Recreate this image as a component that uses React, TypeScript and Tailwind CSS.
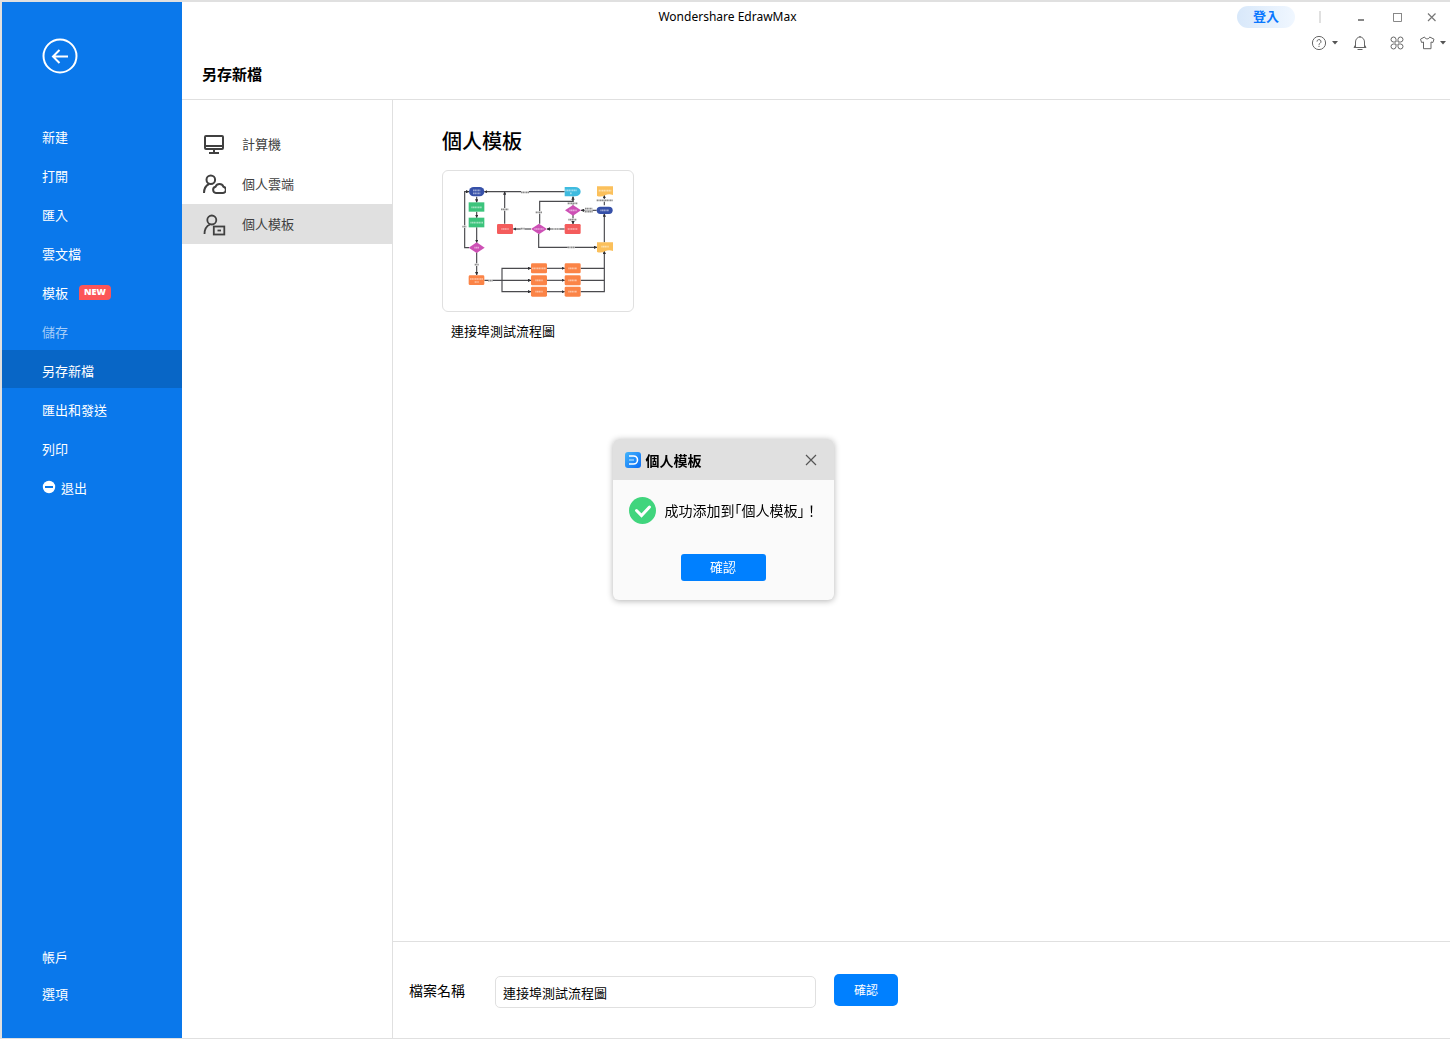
import React from "react";

const NAV_ITEMS = ["新建", "打開", "匯入", "雲文檔", "模板", "儲存", "另存新檔", "匯出和發送", "列印", "退出"];

function BackArrow() {
    return (
        <svg width="36" height="36" viewBox="0 0 36 36" fill="none" stroke="#fff" strokeWidth="2">
            <circle cx="18" cy="18" r="16.5" />
            <path d="M26 18.500H11.500M17.500 12L11 18.500l6.500 6.500" />
        </svg>
    );
}

function ComputerIcon() {
    return (
        <svg width="24" height="24" viewBox="0 0 24 24" fill="none" stroke="#404040" strokeWidth="2">
            <rect x="3" y="4" width="18" height="13" rx="1" />
            <path d="M3 14h18M12 17v4M7 21h10" />
        </svg>
    );
}

function CloudUserIcon() {
    return (
        <svg width="24" height="24" viewBox="0 0 24 24" fill="none" stroke="#404040" strokeWidth="2">
            <circle cx="8.800" cy="7.800" r="4.300" />
            <path d="M2 21c0-5 2-7.500 5-9" />
            <path d="M14 21a3.200 3.200 0 0 1-.4-6.300 4.200 4.200 0 0 1 7.800 0A3.200 3.200 0 0 1 21 21z" />
        </svg>
    );
}

function TemplateUserIcon() {
    return (
        <svg width="24" height="24" viewBox="0 0 24 24" fill="none" stroke="#404040" strokeWidth="1.800">
            <circle cx="9.800" cy="8" r="4.500" />
            <path d="M2.500 22c0-5 2-8 5.500-9.500" />
            <rect x="11.800" y="14.500" width="10.500" height="8" />
            <path d="M15.500 18.500h3.500" />
        </svg>
    );
}

function HelpIcon() {
    return (
        <svg width="16" height="16" viewBox="0 0 16 16" fill="none" stroke="#666">
            <circle cx="8" cy="8" r="6.600" />
            <path d="M6 6.600a2 2 0 1 1 3 1.700c-.7.4-1 .7-1 1.500M8 10.800v1.200" />
        </svg>
    );
}

function BellIcon() {
    return (
        <svg width="16" height="16" viewBox="0 0 16 16" fill="none" stroke="#666">
            <path d="M2 12.500h12M3.500 12V7a4.500 5 0 0 1 9 0v5M2 12.500L3.500 10M14 12.500L12.500 10M5.500 14.500h5M7.200 1.700h1.600" />
        </svg>
    );
}

function AppsIcon() {
    return (
        <svg width="16" height="16" viewBox="0 0 16 16" fill="none" stroke="#666">
            <path d="M7 7H4.300A2.500 2.500 0 1 1 7 4.300zM9 7h2.700A2.500 2.500 0 1 0 9 4.300zM7 9H4.300A2.500 2.500 0 1 0 7 11.700zM9 9h2.700A2.500 2.500 0 1 1 9 11.700z" />
        </svg>
    );
}

function ShirtIcon() {
    return (
        <svg width="16" height="16" viewBox="0 0 16 16" fill="none" stroke="#666" strokeLinejoin="round">
            <path d="M5.500 2L1.500 4.200 2.600 7.500l1.900-.5v6.700h7.500V7l1.900.5 1.100-3.300L10.700 2C10 4.500 6.300 4.500 5.500 2z" />
        </svg>
    );
}

function Caret() {
    return (
        <svg width="6" height="4" viewBox="0 0 6 4">
            <path d="M0 0h6L3 3.500z" fill="#555" />
        </svg>
    );
}

function Arrow({ d }: { d: string }) {
    return <path d={d} fill="none" stroke="#4a4a4e" strokeWidth="3.500" markerEnd="url(#tip)" />;
}

function Label({ x, y, w }: { x: number; y: number; w: number }) {
    return (
        <g>
            <rect x={x - w / 2} y={y - 4} width={w} height="8" fill="#fff" />
            <path d={`M${x - w / 2} ${y}h${w}`} stroke="#8b8b8b" strokeWidth="5" strokeDasharray="4 1" />
        </g>
    );
}

type NodeProps = { x: number; y: number; color: string; w?: number };

function Inner({ x, y, w = 22 }: { x: number; y: number; w?: number }) {
    return <path d={`M${x - w / 2} ${y}h${w}`} stroke="#fff" strokeOpacity=".5" strokeWidth="5" strokeDasharray="4 1" />;
}

function Box({ x, y, color, w }: NodeProps) {
    return (
        <g>
            <rect x={x - 24} y={y - 15} width="48" height="30" rx="4" fill={color} />
            <Inner x={x} y={y} w={w} />
        </g>
    );
}

function Diamond({ x, y, color, w }: NodeProps) {
    return (
        <g>
            <path d={`M${x - 24} ${y}l24-16 24 16-24 16z`} fill={color} />
            <Inner x={x} y={y} w={w} />
        </g>
    );
}

function Doc({ x, y, color, w }: NodeProps) {
    return (
        <g>
            <path d={`M${x - 24} ${y - 15}h48v26c-9-4-17-3-24 1s-16 5-24 2z`} fill={color} />
            <Inner x={x} y={y - 2} w={w} />
        </g>
    );
}

function Flowchart() {
    const orange = "#fb8447";
    return (
        <svg viewBox="24 18 570 420" className="block w-full">
            <defs>
                <marker id="tip" markerUnits="userSpaceOnUse" viewBox="0 0 10 10" refX="9" refY="5" markerWidth="10" markerHeight="10" orient="auto">
                    <path d="M0 0l10 5-10 5z" fill="#2f2f33" />
                </marker>
            </defs>
            <Arrow d="M125 95v17" />
            <Arrow d="M125 140v18" />
            <Arrow d="M125 187v46" />
            <Arrow d="M125 262v68" />
            <Arrow d="M102 248H89V80h13" />
            <Arrow d="M389 80H148" />
            <Arrow d="M209 176V80" />
            <Arrow d="M288 192h-53" />
            <Arrow d="M389 192h-53" />
            <Arrow d="M314 176v-67h100V95" />
            <Arrow d="M414 95v26" />
            <Arrow d="M414 150v27" />
            <Arrow d="M485 136h-47" />
            <Arrow d="M311 207v40h175" />
            <Arrow d="M508 121V91" />
            <Arrow d="M508 232v-86" />
            <Arrow d="M148 346h140" />
            <Arrow d="M201 346v-36h87" />
            <Arrow d="M201 346v34h87" />
            <Arrow d="M336 310h53" />
            <Arrow d="M336 346h53" />
            <Arrow d="M336 380h53" />
            <path d="M437 310h71M437 346h71" stroke="#4a4a4e" strokeWidth="3.500" />
            <Arrow d="M437 380h71V258" />

            <Label x={270} y={82} w={24} />
            <Label x={209} y={133} w={22} />
            <Label x={88} y={185} w={12} />
            <Label x={125} y={299} w={12} />
            <Label x={166} y={347} w={14} />
            <Label x={263} y={191} w={12} />
            <Label x={362} y={192} w={24} />
            <Label x={312} y={142} w={20} />
            <Label x={413} y={115} w={30} />
            <Label x={412} y={164} w={24} />
            <Label x={461} y={131} w={22} />
            <Label x={461} y={140} w={24} />
            <Label x={409} y={247} w={22} />
            <Label x={509} y={106} w={48} />

            <rect x="102" y="66" width="46" height="28" rx="14" fill="#3650a8" />
            <Inner x={125} y={76} />
            <Inner x={125} y={85} />
            <rect x="101" y="112" width="47" height="28" fill="#3cc47c" />
            <Inner x={125} y={127} w={32} />
            <rect x="101" y="158" width="47" height="29" fill="#3cc47c" />
            <Inner x={125} y={173} w={38} />
            <Diamond x={125} y={248} color="#cd50b5" w={14} />
            <rect x="101" y="331" width="47" height="29" rx="4" fill={orange} />
            <Inner x={125} y={342} w={40} />
            <Inner x={125} y={351} w={12} />
            <path d="M389 66h31a17 14 0 0 1 0 28h-31z" fill="#3fbbdf" />
            <Inner x={408} y={76} w={34} />
            <Inner x={408} y={85} w={6} />
            <Diamond x={414} y={136} color="#cd50b5" />
            <Box x={413} y={192} color="#f45c5c" w={30} />
            <Box x={210} y={192} color="#f45c5c" />
            <Diamond x={312} y={192} color="#cd50b5" w={28} />
            <rect x="485" y="125" width="48" height="22" rx="11" fill="#3650a8" />
            <Inner x={509} y={136} w={26} />
            <Doc x={510} y={79} color="#fbc05b" w={38} />
            <Doc x={510} y={247} color="#fbc05b" w={22} />
            <Box x={312} y={310} color={orange} w={42} />
            <Box x={312} y={346} color={orange} />
            <Box x={312} y={380} color={orange} />
            <Box x={413} y={310} color={orange} w={26} />
            <Box x={413} y={346} color={orange} w={26} />
            <Box x={413} y={380} color={orange} w={26} />
        </svg>
    );
}

function NavItem({ label }: { label: string }) {
    const active = label === "另存新檔";
    return (
        <button
            className={`flex h-[38px] w-full items-center pt-1.5 pl-10 text-[13px] leading-5 ${
                active ? "bg-[#0866c6]" : ""
            } ${label === "儲存" ? "text-[#a6cdf8]" : "text-white"}`}
        >
            {label === "退出" && (
                <svg width="14" height="14" viewBox="0 0 14 14" className="mr-[5px] mb-1">
                    <circle cx="7" cy="7" r="6.200" fill="#fff" />
                    <path d="M3 7h8" stroke="#0a78eb" strokeWidth="2" />
                </svg>
            )}
            {label}
            {label === "模板" && (
                <span className="mb-1 ml-[11px] flex h-[15px] w-8 items-center justify-center rounded-sm rounded-bl-none bg-[#fc5558] font-['Open_Sans',sans-serif] text-[9px] font-extrabold">
                    NEW
                </span>
            )}
        </button>
    );
}

function Sidebar() {
    return (
        <nav className="flex w-[180px] shrink-0 flex-col bg-[#0a78eb]">
            <button aria-label="返回" className="mt-9 ml-10 self-start">
                <BackArrow />
            </button>
            <div className="mt-[42px] flex flex-col gap-px">
                {NAV_ITEMS.map((label) => (
                    <NavItem key={label} label={label} />
                ))}
            </div>
            <div className="mt-auto mb-[25px] text-[13px] text-white">
                <button className="block h-[37px] w-full pl-10 text-left">帳戶</button>
                <button className="block h-[37px] w-full pl-10 text-left">選項</button>
            </div>
        </nav>
    );
}

function Header() {
    return (
        <header className="h-[98px] shrink-0 border-b border-[#e0e0e0]">
            <div className="flex h-[30px] items-center">
                <h1 className="flex-1 pl-9 text-center font-['Noto_Sans',sans-serif] text-[12px] text-black">
                    Wondershare EdrawMax
                </h1>
                <button className="h-[22px] w-[58px] rounded-full bg-linear-to-r from-[#d8e8fa] to-[#f0f7ff] text-[13px] leading-5 font-bold text-[#0a78ff]">
                    登入
                </button>
                <span className="mr-8 ml-6 h-3 w-0.5 bg-[#e0e0e0]" />
                <div className="flex gap-[19px] pr-[11px]">
                    <button aria-label="最小化">
                        <svg width="16" height="16" viewBox="0 0 16 16">
                            <path d="M5 11h6" stroke="#888" strokeWidth="2" />
                        </svg>
                    </button>
                    <button aria-label="最大化">
                        <svg width="16" height="16" viewBox="0 0 16 16" fill="none" stroke="#888">
                            <path d="M5.500 4v8.500h8V4M5 4.500h9" />
                        </svg>
                    </button>
                    <button aria-label="關閉">
                        <svg width="16" height="16" viewBox="0 0 16 16" fill="none" stroke="#777" strokeWidth="1.200">
                            <path d="M5 4.500l7.500 7.500M12.500 4.500L5 12" />
                        </svg>
                    </button>
                </div>
            </div>
            <div className="flex h-[22px] items-center justify-end pr-1">
                <button aria-label="說明" className="flex items-center gap-[5px]">
                    <HelpIcon />
                    <Caret />
                </button>
                <button aria-label="通知" className="ml-3.5">
                    <BellIcon />
                </button>
                <button aria-label="應用" className="ml-[21px]">
                    <AppsIcon />
                </button>
                <button aria-label="主題" className="ml-3.5 flex items-center gap-[5px]">
                    <ShirtIcon />
                    <Caret />
                </button>
            </div>
            <h2 className="mt-[11px] pl-5 text-[15px] leading-5 font-bold text-black">另存新檔</h2>
        </header>
    );
}

function Location({ icon, label, active = false }: { icon: React.ReactNode; label: string; active?: boolean }) {
    return (
        <button
            className={`flex h-10 w-full items-center gap-4 pl-5 text-[13px] text-[#404040] ${active ? "bg-[#e0e0e0]" : ""}`}
        >
            {icon}
            <span className="pt-0.5">{label}</span>
        </button>
    );
}

function Dialog() {
    return (
        <div className="pointer-events-none fixed inset-0 flex items-center justify-center pr-1">
            <div
                role="dialog"
                aria-labelledby="dialog-title"
                className="pointer-events-auto w-[221px] overflow-hidden rounded-md bg-[#fafafa] text-black shadow-[0_1px_6px_rgba(0,0,0,0.3)]"
            >
                <div className="flex h-[41px] items-center bg-[#e0e0e0] pr-3.5 pl-3">
                    <svg width="16" height="16" viewBox="0 0 16 16" className="mr-[5px]" fill="none">
                        <defs>
                            <linearGradient id="logo" x1="0" y1="0" x2="1" y2="1">
                                <stop offset="0" stopColor="#43b4fb" />
                                <stop offset="1" stopColor="#0a6cf5" />
                            </linearGradient>
                        </defs>
                        <rect width="16" height="16" rx="3" fill="url(#logo)" />
                        <path d="M4 4h4.500a4 4 0 0 1 0 8H4" stroke="#fff" strokeWidth="1.600" />
                        <path d="M4 8h5" stroke="#8fd0ff" strokeWidth="1.600" />
                    </svg>
                    <h3 id="dialog-title" className="flex-1 pt-0.5 text-[14px] leading-5 font-bold">
                        個人模板
                    </h3>
                    <button aria-label="關閉">
                        <svg width="18" height="18" viewBox="0 0 18 18" stroke="#555" strokeWidth="1.200">
                            <path d="M4 4l10 10M14 4L4 14" />
                        </svg>
                    </button>
                </div>
                <div className="flex flex-col items-center pt-[17px] pb-[19px]">
                    <div className="flex w-full items-center gap-2 pl-4">
                        <svg width="28" height="28" viewBox="0 0 28 28" fill="none">
                            <circle cx="13.500" cy="13.500" r="13.500" fill="#40d57d" />
                            <path d="M7.500 13.500l5 5 8-8.500" stroke="#fff" strokeWidth="3" strokeLinecap="round" />
                        </svg>
                        <p className="text-[14px] leading-5 whitespace-nowrap">
                            <span className="[font-feature-settings:'halt']">成功添加到「個人模板」</span>！
                        </p>
                    </div>
                    <button className="mt-[29px] h-[27px] w-[85px] rounded-[3px] bg-[#0080ff] text-[13px] text-white">
                        確認
                    </button>
                </div>
            </div>
        </div>
    );
}

export default function App() {
    return (
        <div className="flex min-h-screen border-t-2 border-b border-l-2 border-[#e0e0e0] bg-white font-['Liberation_Sans','Noto_Sans_CJK_TC',sans-serif]">
            <Sidebar />
            <div className="flex min-w-0 flex-1 flex-col">
                <Header />
                <div className="flex flex-1">
                    <aside className="w-[211px] shrink-0 border-r border-[#e0e0e0] pt-6">
                        <Location icon={<ComputerIcon />} label="計算機" />
                        <Location icon={<CloudUserIcon />} label="個人雲端" />
                        <Location icon={<TemplateUserIcon />} label="個人模板" active />
                    </aside>
                    <main className="flex min-w-0 flex-1 flex-col text-black">
                        <section className="flex-1 pt-7 pl-[49px]">
                            <h2 className="text-[20px] leading-7 font-medium">個人模板</h2>
                            <button className="mt-3.5 block w-[192px] text-left">
                                <span className="block rounded-md border border-[#e0e0e0]">
                                    <Flowchart />
                                </span>
                                <span className="mt-2.5 block pl-[9px] text-[13px] leading-5">連接埠測試流程圖</span>
                            </button>
                        </section>
                        <form className="flex h-[97px] items-center border-t border-[#e0e0e0] pl-4">
                            <label htmlFor="file-name" className="w-[86px] pt-0.5 text-[14px]">
                                檔案名稱
                            </label>
                            <input
                                id="file-name"
                                type="text"
                                defaultValue="連接埠測試流程圖"
                                className="mt-1 h-8 w-[321px] rounded-[5px] border border-[#e0e0e0] px-[7px] text-[13px] outline-none"
                            />
                            <button
                                type="button"
                                className="ml-[18px] h-8 w-16 rounded-[5px] bg-[#0080ff] pt-0.5 text-[12px] text-white"
                            >
                                確認
                            </button>
                        </form>
                    </main>
                </div>
            </div>
            <Dialog />
        </div>
    );
}
